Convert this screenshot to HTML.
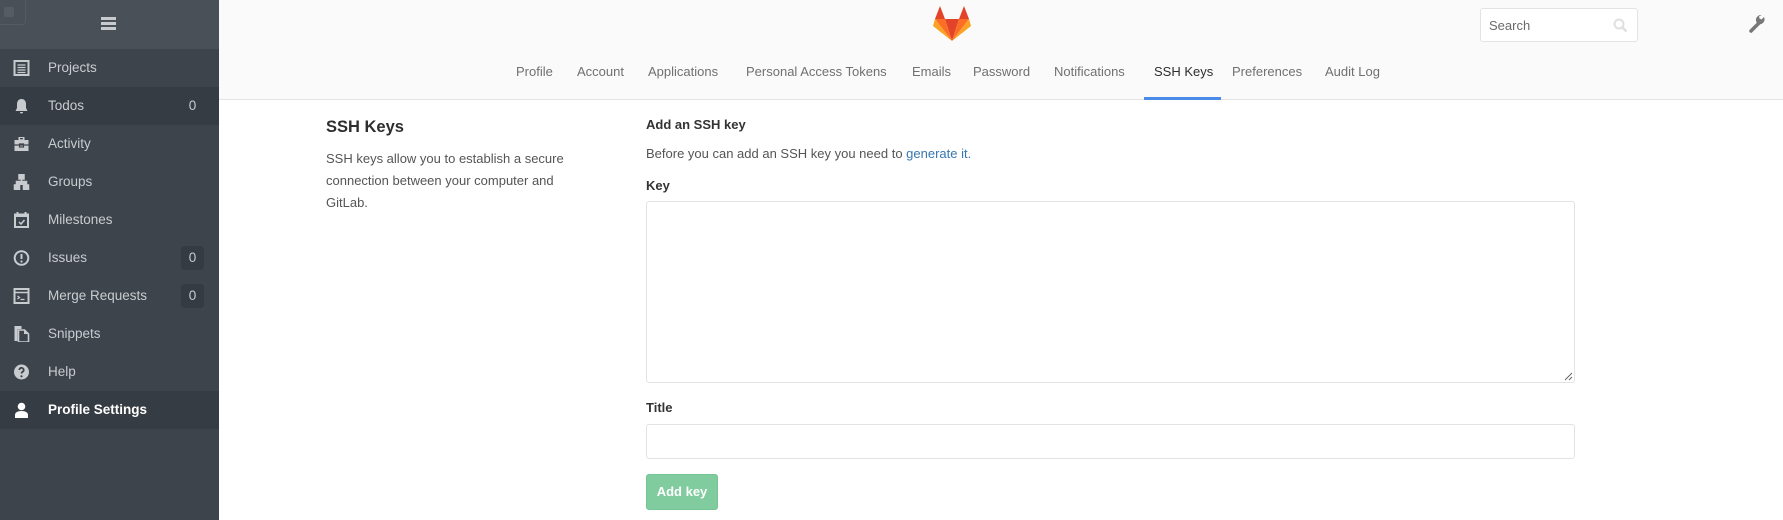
<!DOCTYPE html>
<html><head><meta charset="utf-8"><style>
*{box-sizing:border-box;margin:0;padding:0}
body{width:1783px;height:520px;overflow:hidden;background:#fff;font-family:"Liberation Sans",sans-serif;position:relative;color:#2e2e2e}
.sb{position:absolute;left:0;top:0;width:219px;height:520px;background:#3d444c}
.sbh{height:49px;background:#495057;position:relative}
.sbh .sq{position:absolute;left:0;top:0;width:26px;height:25px;border:1px solid #545b63;border-top:none;border-left:none;border-radius:0 0 4px 0}
.sbh .sq i{position:absolute;left:4px;top:7px;width:10px;height:10px;background:#555c64;border-radius:2px}
.ham{position:absolute;left:101px;top:17px;width:15px}
.ham b{display:block;height:2.5px;background:#c8cbce;margin-bottom:2.5px}
.it{height:38px;position:relative;color:#c9cccf;font-size:13.5px;line-height:38px;padding-left:48px}
.it.dk{background:#363c43}
.it.act{background:#363c43;color:#fff;font-weight:bold}
.it svg{position:absolute;left:13px;top:11px;width:17px;height:16px}
.bd{position:absolute;left:181px;top:7px;width:23px;height:24px;line-height:24px;text-align:center;border-radius:4px;font-size:13.5px}
.bd.b{background:#353b42}
.hd{position:absolute;left:219px;top:0;right:0;height:100px;background:#fafafa;border-bottom:1px solid #e3e3e3}
.tabs{position:absolute;top:64px;font-size:13px;color:#707070}
.tabs span{position:absolute;white-space:nowrap}
.ul{position:absolute;left:1144px;top:97px;width:77px;height:3px;background:#4a8be8}
.search{position:absolute;left:1480px;top:8px;width:158px;height:34px;background:#fff;border:1px solid #e3e3e3;border-radius:3px;font-size:13px;color:#6a6a6a;padding:9px 8px}
h3{position:absolute;left:326px;top:118px;font-size:16.5px;font-weight:bold;color:#2e2e2e}
.desc{position:absolute;left:326px;top:148px;width:260px;font-size:13px;line-height:22px;color:#555}
.lbl{position:absolute;left:646px;font-size:13px;font-weight:bold;color:#333}
.ta{position:absolute;left:646px;top:201px;width:929px;height:182px;border:1px solid #e3e3e3;border-radius:3px}
.in{position:absolute;left:646px;top:424px;width:929px;height:35px;border:1px solid #e3e3e3;border-radius:3px}
.btn{position:absolute;left:646px;top:474px;width:72px;height:36px;background:#80cc9e;border:1px solid #75c494;border-radius:3px;color:#fff;font-size:13px;font-weight:bold;text-align:center;line-height:34px}
</style></head><body>
<div class="sb">
 <div class="sbh"><div class="sq"><i></i></div><div class="ham"><b></b><b></b><b></b></div></div>
 <div class="it"><svg viewBox="0 0 16 16"><rect x="1" y="1" width="14" height="14" fill="none" stroke="#c9cccf" stroke-width="2"/><path d="M4 5h8M4 7.5h8M4 10h8M4 12.5h8" stroke="#c9cccf" stroke-width="1.2"/></svg>Projects</div>
 <div class="it dk"><svg viewBox="0 0 16 16"><path d="M8 1c-3 0-4.5 2.5-4.5 5v4L2 13h12l-1.5-3V6C12.5 3.5 11 1 8 1zM6.5 14a1.5 1.5 0 003 0z" fill="#c9cccf"/></svg>Todos<span class="bd">0</span></div>
 <div class="it"><svg viewBox="0 0 16 16"><path d="M5 1h6v3H5zM1 4h14v11H1z" fill="#c9cccf"/><path d="M1 9h14M6 8h4v3H6z" stroke="#3d444c" fill="none" stroke-width="1.2"/><rect x="6.5" y="2" width="3" height="1.3" fill="#3d444c"/></svg>Activity</div>
 <div class="it"><svg viewBox="0 0 16 16"><path d="M5.5 0h5v5h-5zM1 11h5v5H1zM10 11h5v5h-5zM3 11V7.5h10V11M8 5v3" fill="#c9cccf" stroke="#c9cccf" stroke-width="1.5"/></svg>Groups</div>
 <div class="it"><svg viewBox="0 0 16 16"><rect x="1.5" y="2.5" width="13" height="12.5" fill="none" stroke="#c9cccf" stroke-width="2"/><path d="M1 4h14M4 0v3M12 0v3" stroke="#c9cccf" stroke-width="2"/><path d="M5.5 10l2 2 3.5-4" stroke="#c9cccf" stroke-width="1.5" fill="none"/></svg>Milestones</div>
 <div class="it"><svg viewBox="0 0 16 16"><circle cx="8" cy="8" r="6.8" fill="none" stroke="#c9cccf" stroke-width="2"/><path d="M8 4v5" stroke="#c9cccf" stroke-width="2"/><circle cx="8" cy="11.5" r="1.1" fill="#c9cccf"/></svg>Issues<span class="bd b">0</span></div>
 <div class="it"><svg viewBox="0 0 16 16"><rect x="1" y="1" width="14" height="14" fill="none" stroke="#c9cccf" stroke-width="2"/><path d="M1 4.5h14" stroke="#c9cccf" stroke-width="1.5"/><path d="M4 8l2 1.5L4 11M7 11.5h4" stroke="#c9cccf" stroke-width="1.2" fill="none"/></svg>Merge Requests<span class="bd b">0</span></div>
 <div class="it"><svg viewBox="0 0 16 16"><path d="M1 0h7v3H4v12H1z" fill="#c9cccf"/><path d="M5 4h6l4 4v8H5z" fill="none" stroke="#c9cccf" stroke-width="1.6"/><path d="M10.5 4v4h4" fill="#c9cccf"/></svg>Snippets</div>
 <div class="it"><svg viewBox="0 0 16 16"><circle cx="8" cy="8" r="7.5" fill="#c9cccf"/><path d="M5.8 6a2.2 2.2 0 114 1.3c-.9.6-1.8 1-1.8 2.2" stroke="#3d444c" stroke-width="1.8" fill="none"/><circle cx="8" cy="12.3" r="1.1" fill="#3d444c"/></svg>Help</div>
 <div class="it act"><svg viewBox="0 0 16 16"><circle cx="8" cy="4.5" r="3.8" fill="#fff"/><path d="M1.5 16v-3c0-2.5 2.5-4 6.5-4s6.5 1.5 6.5 4v3z" fill="#fff"/></svg>Profile Settings</div>
</div>
<div class="hd"></div>
<svg style="position:absolute;left:933px;top:6px" width="38" height="35" viewBox="0 0 38 35"><path d="M19 35L12 13H26Z" fill="#e24329"/><path d="M19 35L12 13H2Z" fill="#fc6d26"/><path d="M2 13L0 20l19 15Z" fill="#fca326"/><path d="M2 13H12L7 0Z" fill="#e24329"/><path d="M19 35L26 13H36Z" fill="#fc6d26"/><path d="M36 13L38 20 19 35Z" fill="#fca326"/><path d="M36 13H26L31 0Z" fill="#e24329"/></svg>
<div class="search">Search<svg style="position:absolute;right:9px;top:9px" width="15" height="15" viewBox="0 0 15 15"><circle cx="6" cy="6" r="4.5" fill="none" stroke="#e0e0e0" stroke-width="2"/><path d="M9.5 9.5l4 4" stroke="#e0e0e0" stroke-width="2.5"/></svg></div>
<svg style="position:absolute;left:1749px;top:15px" width="18" height="18" viewBox="0 0 18 18"><path d="M2 16l8-8" stroke="#777" stroke-width="3.5" stroke-linecap="round"/><path d="M9 9a5 5 0 006-7l-2.5 2.5-2-1 -.5-2L12.5 0A5 5 0 009 9z" fill="#777"/></svg>
<div class="tabs">
<span style="left:516px">Profile</span><span style="left:577px">Account</span><span style="left:648px">Applications</span><span style="left:746px">Personal Access Tokens</span><span style="left:912px">Emails</span><span style="left:973px">Password</span><span style="left:1054px">Notifications</span><span style="left:1154px;color:#2e2e2e">SSH Keys</span><span style="left:1232px">Preferences</span><span style="left:1325px">Audit Log</span>
</div>
<div class="ul"></div>
<h3>SSH Keys</h3>
<div class="desc">SSH keys allow you to establish a secure connection between your computer and GitLab.</div>
<div class="lbl" style="top:117px">Add an SSH key</div>
<div class="lbl" style="top:146px;font-weight:normal;color:#555">Before you can add an SSH key you need to <span style="color:#3777b0">generate it.</span></div>
<div class="lbl" style="top:178px">Key</div>
<div class="ta"><svg style="position:absolute;right:1px;bottom:1px" width="9" height="9"><path d="M8 1L1 8M8 5L5 8" stroke="#666"/></svg></div>
<div class="lbl" style="top:400px">Title</div>
<div class="in"></div>
<div class="btn">Add key</div>
</body></html>
